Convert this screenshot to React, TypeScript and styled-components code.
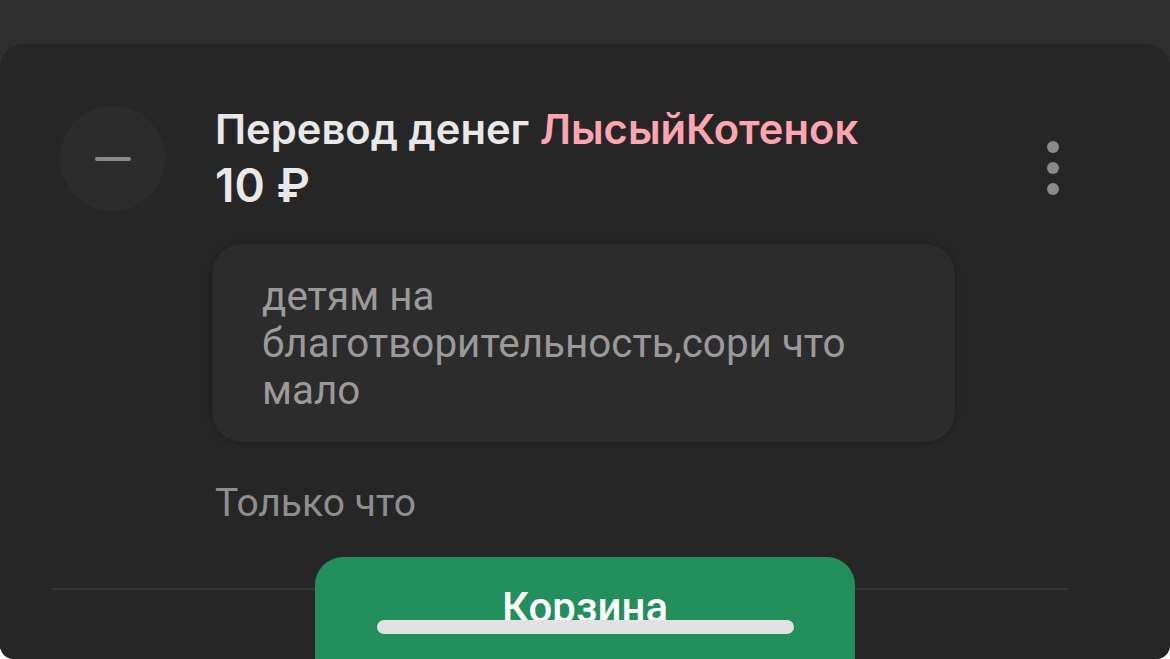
import React from "react";
import styled, { createGlobalStyle } from "styled-components";

const Global = createGlobalStyle`
  html, body { margin: 0; padding: 0; background: #ffffff; }
  #root { width: 1170px; height: 659px; }
`;

const Frame = styled.div`
  position: relative;
  width: 1170px;
  height: 659px;
  background: #2f2f2f;
  border-radius: 0 0 14px 14px;
  overflow: hidden;
  padding-top: 44px;
  box-sizing: border-box;
  font-family: Roboto, "Noto Sans", sans-serif;
`;

const Card = styled.div`
  height: 100%;
  background: #262626;
  border-radius: 24px 24px 0 0;
  padding: 62px 52px 0 52px;
  box-sizing: border-box;
  display: flex;
  flex-direction: column;
`;

const Row = styled.div`
  display: grid;
  grid-template-columns: 105px 1fr 40px;
  column-gap: 50px;
  padding-left: 8px;
  padding-right: 45px;
`;

const Avatar = styled.div`
  width: 105px;
  height: 105px;
  border-radius: 50%;
  background: #2c2c2c;
  display: flex;
  align-items: center;
  justify-content: center;
`;

const Minus = styled.div`
  width: 36px;
  height: 4px;
  border-radius: 2px;
  background: #8a8a8a;
`;

const Content = styled.div`
  display: flex;
  flex-direction: column;
  align-items: flex-start;
`;

const Title = styled.div`
  font-family: Inter, "Liberation Sans", sans-serif;
  font-weight: 600;
  font-size: 41.7px;
  line-height: 48px;
  color: #e8e8e8;
  white-space: nowrap;
  margin-top: -1px;
`;

const Name = styled.span`
  color: #ffa5b2;
`;

const Amount = styled.div`
  margin-top: 8px;
  font-family: Inter, "Liberation Sans", sans-serif;
  font-weight: 600;
  font-size: 46px;
  line-height: 48px;
  color: #e8e8e8;
`;

const Bubble = styled.div`
  margin-top: 35px;
  margin-left: -3px;
  width: 743px;
  box-sizing: border-box;
  padding: 29px 50px 28px 50px;
  background: #2c2c2c;
  border-radius: 30px;
  box-shadow: 0 0 6px rgba(0, 0, 0, 0.25);
  font-size: 40.4px;
  line-height: 47px;
  color: #9a9a9a;
`;

const Time = styled.div`
  margin-top: 37px;
  font-size: 39px;
  line-height: 48px;
  color: #8e8e8e;
`;

const Menu = styled.div`
  display: flex;
  flex-direction: column;
  align-items: center;
  gap: 9px;
  padding-top: 35px;
`;

const Dot = styled.div`
  width: 12px;
  height: 12px;
  border-radius: 50%;
  background: #8a8a8a;
`;

const Divider = styled.div`
  margin-top: 61px;
  height: 2px;
  background: #363636;
  margin-right: 50px;
`;

const CartButton = styled.div`
  position: absolute;
  left: 315px;
  top: 557px;
  width: 540px;
  height: 130px;
  border-radius: 28px;
  background: #228f5c;
  display: flex;
  justify-content: center;
  padding-top: 27px;
  box-sizing: border-box;
  font-family: Roboto, sans-serif;
  font-weight: 500;
  font-size: 42px;
  line-height: 48px;
  color: #ffffff;
`;

const HomeIndicator = styled.div`
  position: absolute;
  left: 377px;
  top: 620px;
  width: 417px;
  height: 14px;
  border-radius: 7px;
  background: #e2e2e2;
`;

export default function App() {
  return (
    <>
      <Global />
      <Frame>
        <Card>
          <Row>
            <Avatar>
              <Minus />
            </Avatar>
            <Content>
              <Title>
                Перевод денег <Name>ЛысыйКотенок</Name>
              </Title>
              <Amount>10 ₽</Amount>
              <Bubble>детям на благотворительность,сори что мало</Bubble>
              <Time>Только что</Time>
            </Content>
            <Menu>
              <Dot />
              <Dot />
              <Dot />
            </Menu>
          </Row>
          <Divider />
        </Card>
        <CartButton>Корзина</CartButton>
        <HomeIndicator />
      </Frame>
    </>
  );
}
